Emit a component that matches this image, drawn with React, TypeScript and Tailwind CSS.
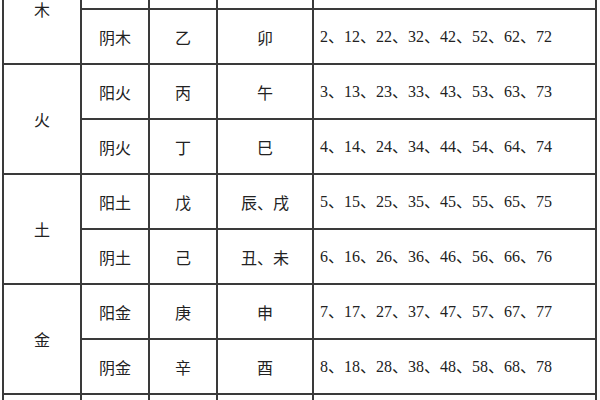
import React from 'react';

const groups = [
  {
    element: '木',
    rows: [
      { name: '阳木', stem: '甲', branch: '寅', start: 1 },
      { name: '阴木', stem: '乙', branch: '卯', start: 2 },
    ],
  },
  {
    element: '火',
    rows: [
      { name: '阳火', stem: '丙', branch: '午', start: 3 },
      { name: '阴火', stem: '丁', branch: '巳', start: 4 },
    ],
  },
  {
    element: '土',
    rows: [
      { name: '阳土', stem: '戊', branch: '辰、戌', start: 5 },
      { name: '阴土', stem: '己', branch: '丑、未', start: 6 },
    ],
  },
  {
    element: '金',
    rows: [
      { name: '阳金', stem: '庚', branch: '申', start: 7 },
      { name: '阴金', stem: '辛', branch: '酉', start: 8 },
    ],
  },
  {
    element: '水',
    rows: [
      { name: '阳水', stem: '壬', branch: '子', start: 9 },
      { name: '阴水', stem: '癸', branch: '亥', start: 10 },
    ],
  },
];

const numbers = (start: number) =>
  Array.from({ length: 8 }, (_, i) => start + i * 10).join('、');

export default function App() {
  return (
    <div className="w-[600px] h-[400px] overflow-hidden bg-white">
      <table className="table-fixed border-collapse w-[595px] ml-[2px] -mt-[47px] text-[16px] text-[#222] font-['Noto_Sans_CJK_SC',sans-serif]">
        <colgroup>
          <col className="w-[78px]" />
          <col className="w-[68px]" />
          <col className="w-[68px]" />
          <col className="w-[96px]" />
          <col />
        </colgroup>
        <tbody>
          {groups.map((group) =>
            group.rows.map((row, i) => (
              <tr key={row.name} className="h-[55px]">
                {i === 0 && (
                  <td rowSpan={2} className="border-2 border-[#3a3a3a] text-center align-middle">
                    {group.element}
                  </td>
                )}
                <td className="border-2 border-[#3a3a3a] text-center align-middle">{row.name}</td>
                <td className="border-2 border-[#3a3a3a] text-center align-middle">{row.stem}</td>
                <td className="border-2 border-[#3a3a3a] text-center align-middle">{row.branch}</td>
                <td className="border-2 border-[#3a3a3a] pl-[6px] align-middle text-[16px] font-['Liberation_Serif','Noto_Sans_CJK_SC',serif]">
                  {numbers(row.start)}
                </td>
              </tr>
            ))
          )}
        </tbody>
      </table>
    </div>
  );
}
